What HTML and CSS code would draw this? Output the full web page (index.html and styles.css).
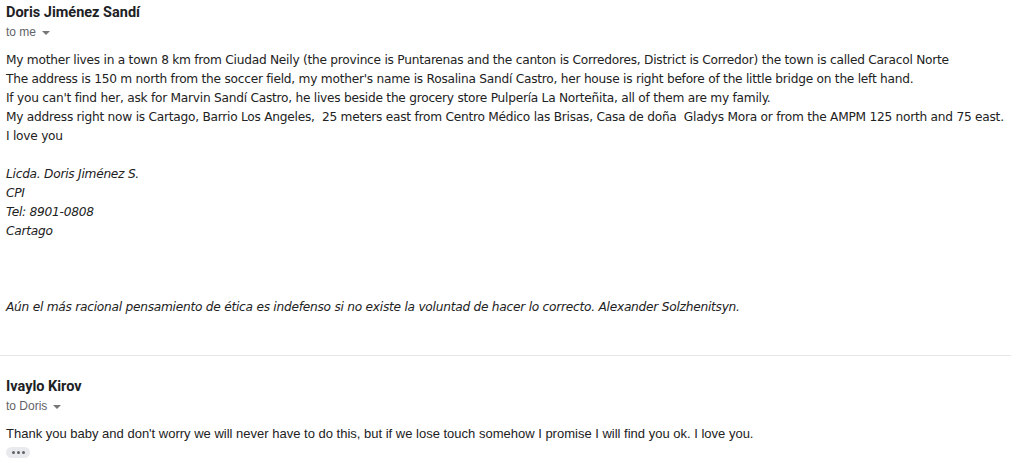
FILE: index.html
```html
<!DOCTYPE html>
<html>
<head>
<meta charset="utf-8">
<link rel="stylesheet" href="styles.css">
</head>
<body>
<div class="msg first">
  <div class="sender">Doris Jiménez Sandí</div>
  <div class="to">to me <span class="caret"></span></div>
  <div class="body tahoma">
    <div>My mother lives in a town 8 km from Ciudad Neily (the province is Puntarenas and the canton is Corredores, District is Corredor) the town is called Caracol Norte</div>
    <div>The address is 150 m north from the soccer field, my mother's name is Rosalina Sandí Castro, her house is right before of the little bridge on the left hand.</div>
    <div>If you can't find her, ask for Marvin Sandí Castro, he lives beside the grocery store Pulpería La Norteñita, all of them are my family.</div>
    <div>My address right now is Cartago, Barrio Los Angeles,&nbsp; 25 meters east from Centro Médico las Brisas, Casa de doña&nbsp; Gladys Mora or from the AMPM 125 north and 75 east.</div>
    <div>I love you</div>
    <div class="blank"></div>
    <div class="sig">
      <div>Licda. Doris Jiménez S.</div>
      <div>CPI</div>
      <div>Tel: 8901-0808</div>
      <div>Cartago</div>
    </div>
    <div class="quote">Aún el más racional pensamiento de ética es indefenso si no existe la voluntad de hacer lo correcto. Alexander Solzhenitsyn.</div>
  </div>
</div>
<div class="divider"></div>
<div class="msg second">
  <div class="sender">Ivaylo Kirov</div>
  <div class="to">to Doris <span class="caret"></span></div>
  <div class="body arial">Thank you baby and don't worry we will never have to do this, but if we lose touch somehow I promise I will find you ok. I love you.</div>
  <div class="more"><span></span><span></span><span></span></div>
</div>
</body>
</html>
```
FILE: styles.css
```css
html, body {
  margin: 0;
  padding: 0;
  background: #fff;
}
body {
  font-family: "Liberation Sans", Arial, sans-serif;
  color: #222;
}
.msg {
  padding-left: 6px;
}
.first {
  padding-top: 3px;
}
.sender {
  font-family: Roboto, "Liberation Sans", Arial, sans-serif;
  font-weight: bold;
  font-size: 14.5px;
  line-height: 19px;
  color: #202124;
}
.to {
  font-family: "Liberation Sans", Arial, sans-serif;
  font-size: 12px;
  line-height: 20px;
  color: #5f6368;
  display: flex;
  align-items: center;
  gap: 6px;
}
.caret {
  width: 0;
  height: 0;
  border-left: 4px solid transparent;
  border-right: 4px solid transparent;
  border-top: 4px solid #777;
  margin-top: 1px;
}
.body {
  margin-top: 9px;
}
.tahoma {
  font-family: "DejaVu Sans", Verdana, sans-serif;
  font-size: 12.2px;
  line-height: 19px;
  color: #222;
  letter-spacing: -0.25px;
}
.blank {
  height: 19px;
}
.sig, .quote {
  font-style: italic;
}
.quote {
  margin-top: 57px;
}
.divider {
  height: 1px;
  background: #e8e8e8;
  margin-top: 38px;
}
.second {
  padding-top: 21px;
}
.arial {
  font-family: "Liberation Sans", Arial, sans-serif;
  font-size: 13px;
  line-height: 20px;
  margin-top: 8px;
  color: #222;
}
.more {
  margin-top: 3px;
  width: 24px;
  height: 11px;
  border-radius: 6px;
  background: #e8eaed;
  display: flex;
  align-items: center;
  justify-content: center;
  gap: 2px;
}
.more span {
  width: 3px;
  height: 3px;
  border-radius: 50%;
  background: #5f6368;
}
```
